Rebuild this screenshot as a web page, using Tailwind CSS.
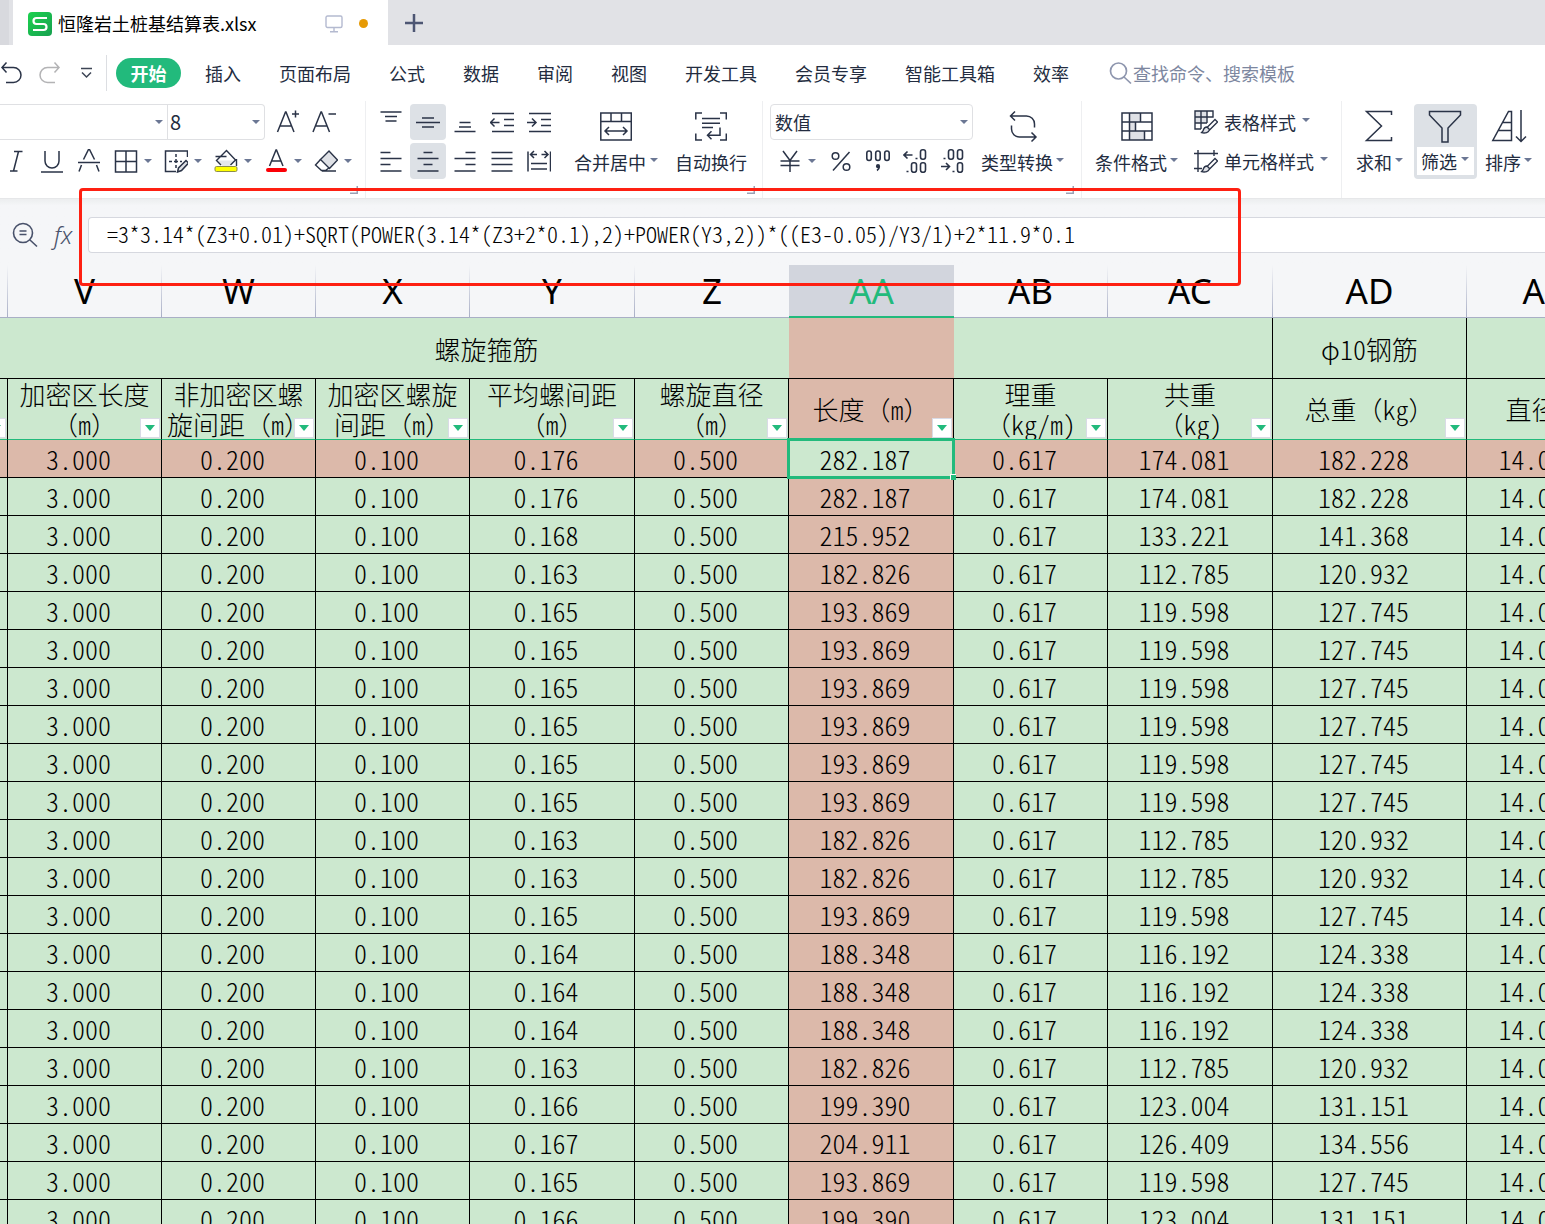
<!DOCTYPE html>
<html lang="zh-CN">
<head>
<meta charset="utf-8">
<title>恒隆岩土桩基结算表.xlsx</title>
<script src="https://cdn.jsdelivr.net/npm/@tailwindcss/browser@4"></script>
</head>
<body class="h-screen overflow-hidden flex flex-col bg-white font-['Noto_Sans_CJK_SC',sans-serif] text-lg leading-6 text-[#232c40]">

<svg class="hidden">
  <symbol id="caret" viewBox="0 0 8 4"><path d="M0 0h8L4 4z" fill="#6b7794"/></symbol>
  <symbol id="corner" viewBox="0 0 8 8"><path d="M7.25 0v7.25H0" fill="none" stroke="#9aa1b5" stroke-width="1.5"/></symbol>
  <symbol id="brush" viewBox="0 0 24 24"><g fill="#fff" stroke="#2a3347" stroke-width="1.3"><path d="M21 9.500l2.500 2.500-8 8-2.500-2.500z"/><path d="M13 17c-3 0-3.500 2-4 4l-1.500 1.700c3.500.8 7.500 0 8-3.200z" fill="#dfe1e6"/></g></symbol>
</svg>

<header class="flex h-[45px] shrink-0 items-stretch bg-[#e1e2e6]">
  <div class="w-[9px] bg-[#d8d9de]"></div>
  <div class="ml-1 flex w-[375px] items-center bg-white pl-[15px] pt-0.5">
    <svg class="size-6" viewBox="0 0 24 24"><defs><linearGradient id="lg" x1="0" y1="0" x2="1" y2="1"><stop offset="0" stop-color="#1cd24f"/><stop offset="1" stop-color="#17a04f"/></linearGradient></defs><rect width="24" height="24" rx="4" fill="url(#lg)"/><path d="M19 6H8.500a3 3 0 0 0 0 6h7a3 3 0 0 1 0 6H5" fill="none" stroke="#fff" stroke-width="2.200"/></svg>
    <span class="ml-1.5 grow pb-0.5 text-black">恒隆岩土桩基结算表.xlsx</span>
    <svg class="size-[18px]" viewBox="0 0 18 18" fill="none" stroke="#b4bad0" stroke-width="1.400"><rect x="1" y="1" width="16" height="11.500" rx="1.500"/><path d="M9 12.500v4M5 16.700h8"/></svg>
    <span class="ml-4 mr-5 size-[9px] rounded-full bg-[#e69a05]"></span>
  </div>
  <button class="ml-4 flex w-5 items-center justify-center" aria-label="新建标签">
    <svg class="size-[18px]" viewBox="0 0 18 18" stroke="#4d5673" stroke-width="2.500"><path d="M9 0v18M0 9h18"/></svg>
  </button>
</header>

<nav class="flex h-14 shrink-0 items-center whitespace-nowrap">
  <button aria-label="撤销" class="ml-px"><svg class="h-6 w-[22px]" viewBox="0 0 22 24" fill="none" stroke="#2a3347" stroke-width="1.500"><path d="M5.500 1.500L1 6.500l4.500 5M1 6.500h11.500a7 7 0 0 1 0 15H5"/></svg></button>
  <button aria-label="恢复" class="ml-4"><svg class="h-6 w-[22px]" viewBox="0 0 22 24" fill="none" stroke="#b3b3b5" stroke-width="1.500"><path d="M15.500 1.500l4.500 5-4.500 5M20 6.500H8.500a7 7 0 0 0 0 15H16"/></svg></button>
  <button aria-label="更多" class="ml-5"><svg class="h-3 w-[11px]" viewBox="0 0 11 12" fill="none" stroke="#3d4555" stroke-width="1.500"><path d="M0 1.500h11M1 5.500l4.500 4.500L10 5.500"/></svg></button>
  <span class="ml-3.5 h-9 w-px bg-[#dcdee2]"></span>
  <button class="ml-[9px] h-[30px] w-[65px] rounded-full bg-[#22ba7c] font-bold text-white">开始</button>
  <div class="ml-6 flex gap-[38px]">
    <button>插入</button><button>页面布局</button><button>公式</button><button>数据</button><button>审阅</button><button>视图</button><button>开发工具</button><button>会员专享</button><button>智能工具箱</button><button>效率</button>
  </div>
  <label class="ml-10 flex grow items-center" aria-label="搜索">
    <svg class="size-6" viewBox="0 0 24 24" fill="none" stroke="#8e96ae" stroke-width="1.700"><circle cx="9.500" cy="10" r="8"/><path d="M15 16l7 6.500"/></svg>
    <input class="w-48 placeholder:text-[#7d879f] placeholder:opacity-100" placeholder="查找命令、搜索模板">
  </label>
</nav>

<section class="flex h-[98px] shrink-0 border-b border-[#e6e7e9] bg-white whitespace-nowrap" aria-label="开始">
  <!-- font -->
  <div class="relative flex w-[366px] shrink-0 flex-col gap-[3px] border-r border-[#eeeff1] pt-[3px]">
    <div class="flex h-9">
      <div class="flex w-[265px] rounded-r border border-l-0 border-[#dfe0e3]">
        <div class="relative flex w-[167px] items-center"><select aria-label="字体" class="h-full w-full appearance-none"><option></option></select><svg class="pointer-events-none absolute right-1 h-1 w-2"><use href="#caret"/></svg></div>
        <div class="relative flex grow items-center border-l border-[#dfe0e3]"><select aria-label="字号" class="h-full w-full appearance-none pl-0.5 text-xl"><option>8</option></select><svg class="pointer-events-none absolute right-1 h-1 w-2"><use href="#caret"/></svg></div>
      </div>
      <button aria-label="增大字号" class="ml-[5px] flex w-9 items-center justify-center"><svg class="size-6" viewBox="0 0 24 24" fill="none" stroke="#2a3347" stroke-width="1.500"><path d="M1.500 22L9.500 2h.5l8 20M4.500 16H15M19.500.500v7M16 4h7"/></svg></button>
      <button aria-label="减小字号" class="flex w-9 items-center justify-center"><svg class="size-6" viewBox="0 0 24 24" fill="none" stroke="#2a3347" stroke-width="1.500"><path d="M1 22L9 2h.500l8 20M4 16h10.500M16.500 4H24"/></svg></button>
    </div>
    <div class="flex h-9 items-center">
      <button aria-label="倾斜" class="flex w-[33px] justify-center"><svg class="size-6" viewBox="0 0 24 24" fill="none" stroke="#2a3347" stroke-width="1.500"><path d="M9 2.500h8.500M5 22h7.500M13.500 2.500L8.500 22"/></svg></button>
      <button aria-label="下划线" class="flex w-[37px] justify-center"><svg class="size-6" viewBox="0 0 24 24" fill="none" stroke="#2a3347" stroke-width="1.500"><path d="M5 2v10a7 7 0 0 0 14 0V2M1 23h22"/></svg></button>
      <button aria-label="删除线" class="flex w-[37px] justify-center"><svg class="size-6" viewBox="0 0 24 24" fill="none" stroke="#2a3347" stroke-width="1.500"><path d="M6.500 10.500L11.500.500h1l5 10M1 13.500h22M4.500 16L2 22.500M19.500 16l2.500 6.500"/></svg></button>
      <button aria-label="边框" class="flex w-[50px] items-center gap-1.5 pl-[7px]"><svg class="size-6" viewBox="0 0 24 24" fill="none" stroke="#2a3347" stroke-width="1.500"><path d="M1.500 2h21v21h-21zM12 2v21M1.500 12.500h21"/></svg><svg class="h-1 w-2"><use href="#caret"/></svg></button>
      <button aria-label="绘图边框" class="flex w-[50px] items-center gap-1.5 pl-[7px]"><svg class="size-6" viewBox="0 0 24 24" fill="none" stroke="#2a3347" stroke-width="1.500"><path d="M23.500 8V2h-22v20.500H12"/><path d="M12 5v3M12 10v4M12 16v3M5 12.500h3M10 12.500h4M16 12.500h2"/><path d="M13.500 23l1-4 7.500-7.500 2.500 2.500-7 7.500z" fill="#dfe1e6"/></svg><svg class="h-1 w-2"><use href="#caret"/></svg></button>
      <button aria-label="填充颜色" class="flex w-[50px] items-center gap-1.5 pl-[7px]"><svg class="size-6" viewBox="0 0 24 24" fill="none" stroke="#2a3347" stroke-width="1.400"><path d="M3 11.500h18l-6 6H9z" fill="#e4e6ea" stroke="none"/><path d="M7 16L2.500 11.500 12.500 1.500l9 9.500-5 5M1.500 7.500h11M22.500 10v7"/><rect x="1" y="17.500" width="22" height="5" rx="1.500" fill="#ff0" stroke="#8d8d4a" stroke-width="1"/></svg><svg class="h-1 w-2"><use href="#caret"/></svg></button>
      <button aria-label="字体颜色" class="flex w-[50px] items-center gap-1.5 pl-[7px]"><svg class="size-6" viewBox="0 0 24 24" fill="none" stroke="#2a3347" stroke-width="1.500"><path d="M5.500 17L12 1h.5L19 17M8 12h9"/><rect x="2" y="19" width="21" height="4" rx="2" fill="#fb0007" stroke="none"/></svg><svg class="h-1 w-2"><use href="#caret"/></svg></button>
      <button aria-label="清除" class="flex w-[50px] items-center gap-1.5 pl-[7px]"><svg class="size-6" viewBox="0 0 24 24" fill="none" stroke="#2a3347" stroke-width="1.400"><path d="M6.500 10.500L15 2l8.500 9-8 8.500z" fill="#dfe1e6"/><path d="M6.500 10.500L1.500 16l6 5.500h4l4-3M8 22h14"/></svg><svg class="h-1 w-2"><use href="#caret"/></svg></button>
    </div>
    <svg class="absolute bottom-1 right-[7px] size-2"><use href="#corner"/></svg>
  </div>

  <!-- alignment -->
  <div class="relative flex w-[397px] shrink-0 border-r border-[#eeeff1] pl-[7px] pt-[3px]">
    <div class="grid h-[75px] grid-cols-[repeat(5,36px)] gap-x-px gap-y-[3px]">
      <button aria-label="顶端对齐" class="flex items-center justify-center"><svg class="size-6" viewBox="0 0 24 24" stroke="#2a3347" stroke-width="1.500"><path d="M1.500 2h21M6 6.500h12M6.500 11h11"/></svg></button>
      <button aria-label="垂直居中" class="flex items-center justify-center rounded bg-[#dde1e6]"><svg class="size-6" viewBox="0 0 24 24" stroke="#2a3347" stroke-width="1.500"><path d="M6 8h12M0 12.500h24M6 17h12"/></svg></button>
      <button aria-label="底端对齐" class="flex items-center justify-center"><svg class="size-6" viewBox="0 0 24 24" stroke="#2a3347" stroke-width="1.500"><path d="M6.500 12.500h11M6 17h12M1.500 21.500h21"/></svg></button>
      <button aria-label="减少缩进" class="flex items-center justify-center"><svg class="size-6" viewBox="0 0 24 24" fill="none" stroke="#2a3347" stroke-width="1.500"><path d="M2 3.500h22M14 9.500h10M14 15.500h10M2 21.500h22M0 12.500h9.500M4.500 8.500L.500 12.500l4 4"/></svg></button>
      <button aria-label="增加缩进" class="flex items-center justify-center"><svg class="size-6" viewBox="0 0 24 24" fill="none" stroke="#2a3347" stroke-width="1.500"><path d="M2 3.500h22M14 9.500h10M14 15.500h10M2 21.500h22M0 12.500h9.500M5 8.500l4 4-4 4"/></svg></button>
      <button aria-label="左对齐" class="flex items-center justify-center"><svg class="size-6" viewBox="0 0 24 24" stroke="#2a3347" stroke-width="1.500"><path d="M1.500 3.500h10M1.500 9.500h21M1.500 15.500h10M1.500 22h21"/></svg></button>
      <button aria-label="水平居中" class="flex items-center justify-center rounded bg-[#dde1e6]"><svg class="size-6" viewBox="0 0 24 24" stroke="#2a3347" stroke-width="1.500"><path d="M7.500 3.500h9M1.500 9.500h21M7.500 15.500h9M1.500 22h21"/></svg></button>
      <button aria-label="右对齐" class="flex items-center justify-center"><svg class="size-6" viewBox="0 0 24 24" stroke="#2a3347" stroke-width="1.500"><path d="M12.500 3.500h10M1.500 9.500h21M12.500 15.500h10M1.500 22h21"/></svg></button>
      <button aria-label="两端对齐" class="flex items-center justify-center"><svg class="size-6" viewBox="0 0 24 24" stroke="#2a3347" stroke-width="1.500"><path d="M1.500 3.500h21M1.500 9.500h21M1.500 15.500h21M1.500 22h21"/></svg></button>
      <button aria-label="分散对齐" class="flex items-center justify-center"><svg class="size-6" viewBox="0 0 24 24" fill="none" stroke="#2a3347" stroke-width="1.500"><path d="M1 2.500v20M23.500 2.500v20M4 14.500h16M4 20h16M4 5.500h6M7 2L3.500 5.500 7 9M20.500 5.500h-6M17.500 2L21 5.500 17.500 9"/></svg></button>
    </div>
    <button class="ml-[17px] flex h-[75px] flex-col items-center gap-2 pt-1.5">
      <svg class="size-8" viewBox="0 0 32 32" fill="none" stroke="#2a3347" stroke-width="1.500"><path d="M.8 3h30.500v27H.8zM.8 11.500h30.500M11 3v8.500M21.500 3v8.500M5 21h22M9 17l-4 4 4 4M23 17l4 4-4 4"/></svg>
      <span class="flex items-center gap-1">合并居中<svg class="h-1 w-2 -translate-y-0.5"><use href="#caret"/></svg></span>
    </button>
    <button class="ml-[17px] flex h-[75px] flex-col items-center gap-2 pt-1.5">
      <svg class="size-8" viewBox="0 0 32 32" fill="none" stroke="#2a3347" stroke-width="1.500"><path d="M7 3H.8v6.500M25 3h6.300v6.500M.8 23.500V30H7M31.300 23.500V30H25M7 8.500h18M7 13.200h18M7 17.500h11M25 17.500v7.700H12.500M16.500 21.200l-4 4 4 4"/></svg>
      <span>自动换行</span>
    </button>
    <svg class="absolute bottom-1 right-[7px] size-2"><use href="#corner"/></svg>
  </div>

  <!-- number -->
  <div class="relative flex w-[319px] shrink-0 border-r border-[#eeeff1] pl-[7px] pt-[3px]">
    <div class="flex w-[203px] flex-col gap-[3px]">
      <div class="relative flex h-9 items-center rounded border border-[#dfe0e3]"><select aria-label="数字格式" class="h-full w-full appearance-none pl-1"><option>数值</option></select><svg class="pointer-events-none absolute right-1 h-1 w-2"><use href="#caret"/></svg></div>
      <div class="flex h-9 items-center gap-px">
        <button aria-label="货币" class="flex w-[52px] items-center gap-1.5 pl-2"><svg class="size-6" viewBox="0 0 24 24" fill="none" stroke="#2a3347" stroke-width="1.500"><path d="M5 2l7 9.500L19 2M2.500 12h19M2.500 16.500h19M12 11.500V23"/></svg><svg class="h-1 w-2"><use href="#caret"/></svg></button>
        <button aria-label="百分比" class="flex w-9 justify-center"><svg class="size-6" viewBox="0 0 24 24" fill="none" stroke="#2a3347" stroke-width="1.500"><circle cx="6.500" cy="7" r="3.300"/><circle cx="17.500" cy="18" r="3.300"/><path d="M20.500 3L4 21.500"/></svg></button>
        <button aria-label="千位分隔" class="flex w-9 justify-center"><svg class="size-6" viewBox="0 0 24 24" fill="none" stroke="#2a3347" stroke-width="1.600"><rect x=".8" y="2" width="4.500" height="9.500" rx="2.200"/><rect x="9.700" y="2" width="4.500" height="9.500" rx="2.200"/><rect x="18.700" y="2" width="4.500" height="9.500" rx="2.200"/><circle cx="12" cy="17.200" r="1.300" fill="#2a3347"/><path d="M13.300 17.500c0 2-.8 3-2.300 4"/></svg></button>
        <button aria-label="增加小数位" class="flex w-9 justify-center"><svg class="size-6" viewBox="0 0 24 24" fill="none" stroke="#2a3347" stroke-width="1.600"><path d="M1 6h8.500M4.500 2.500L1 6l3.500 3.500M12.500 9.500h2M3.500 22.500h2"/><rect x="17.500" y=".8" width="5" height="9.500" rx="2.200"/><rect x="8.500" y="13.800" width="5" height="9.500" rx="2.200"/><rect x="17.500" y="13.800" width="5" height="9.500" rx="2.200"/></svg></button>
        <button aria-label="减少小数位" class="flex w-9 justify-center"><svg class="size-6" viewBox="0 0 24 24" fill="none" stroke="#2a3347" stroke-width="1.600"><path d="M1 17.500h8.500M6 14l3.500 3.500L6 21M12.500 22.500h2M3.500 9.500h2"/><rect x="8.500" y=".8" width="5" height="9.500" rx="2.200"/><rect x="17.500" y=".8" width="5" height="9.500" rx="2.200"/><rect x="17.500" y="13.800" width="5" height="9.500" rx="2.200"/></svg></button>
      </div>
    </div>
    <button class="ml-2 flex h-[75px] flex-col items-center gap-2 pt-1.5">
      <svg class="size-8 overflow-visible" viewBox="0 0 32 32" fill="none" stroke="#2a3347" stroke-width="1.500"><path d="M8 1.500L3.500 6 8 10.500M3.500 6h16a8 8 0 0 1 8 8v3.500M24.500 22.500L29 27l-4.500 4.500M29 27H12.500a8 8 0 0 1-8-8v-3.500"/></svg>
      <span class="flex items-center gap-[3px]">类型转换<svg class="h-1 w-2 -translate-y-0.5"><use href="#caret"/></svg></span>
    </button>
    <svg class="absolute bottom-1 right-[7px] size-2"><use href="#corner"/></svg>
  </div>

  <!-- styles -->
  <div class="flex w-[260px] shrink-0 border-r border-[#eeeff1] pl-[13px] pt-[3px]">
    <button class="flex h-[75px] flex-col items-center gap-2 pt-1.5">
      <svg class="size-8" viewBox="0 0 32 32" fill="none" stroke="#2a3347" stroke-width="1.500"><path d="M8.500 3h11v9h-11zM8.500 12h6v9h-6zM8.500 21h15v9h-15z" fill="#dfe1e6" stroke="none"/><path d="M1 3h30v27H1zM1 12h30M1 21h30M8.500 3v27M19.500 3v9M14.500 12v9M23.500 21v9"/></svg>
      <span class="flex items-center gap-[3px]">条件格式<svg class="h-1 w-2 -translate-y-0.5"><use href="#caret"/></svg></span>
    </button>
    <div class="ml-4 flex flex-col gap-[3px]">
      <button class="flex h-9 items-center gap-1.5"><svg class="size-6" viewBox="0 0 24 24" fill="none" stroke="#2a3347" stroke-width="1.400"><path d="M1 1h12v12H1z" fill="#dfe1e6" stroke="none"/><path d="M7 19H1V1h18v6H1M1 13h12M7 1v18M13 1v12"/><use href="#brush" width="24" height="24"/></svg><span class="flex items-center gap-1.5">表格样式<svg class="h-1 w-2 -translate-y-0.5"><use href="#caret"/></svg></span></button>
      <button class="flex h-9 items-center gap-1.5"><svg class="size-6" viewBox="0 0 24 24" fill="none" stroke="#2a3347" stroke-width="1.400"><path d="M0 4.500h24M4 1v22M20 1v6M0 19.500h8"/><use href="#brush" width="24" height="24"/></svg><span class="flex items-center gap-1.5">单元格样式<svg class="h-1 w-2 -translate-y-0.5"><use href="#caret"/></svg></span></button>
    </div>
  </div>

  <!-- editing -->
  <div class="flex pl-3.5 pt-[3px]">
    <button class="flex h-[75px] flex-col items-center gap-2 pt-1.5">
      <svg class="size-8" viewBox="0 0 32 32" fill="none" stroke="#2a3347" stroke-width="1.500"><path d="M27.500 5V1.500h-25l15 14.500-15 14.500h25V27"/></svg>
      <span class="flex items-center gap-[3px]">求和<svg class="h-1 w-2 -translate-y-0.5"><use href="#caret"/></svg></span>
    </button>
    <button class="ml-[11px] flex h-[75px] flex-col items-center gap-[5px] rounded bg-[#dde1e6] px-[3px] pt-1.5">
      <svg class="size-8 overflow-visible" viewBox="0 0 32 32" fill="none" stroke="#2a3347" stroke-width="1.500"><path d="M-.5 1.500h31V5L18 18v14h-6V18L-.5 5z"/></svg>
      <span class="flex h-7 items-center gap-1 bg-white pl-1 pr-[5px]">筛选<svg class="h-1 w-2 -translate-y-0.5"><use href="#caret"/></svg></span>
    </button>
    <button class="ml-2 flex h-[75px] flex-col items-center gap-2 pt-1.5">
      <svg class="h-8 w-[34px] overflow-visible" viewBox="0 0 34 32" fill="none" stroke="#2a3347" stroke-width="1.500"><path d="M16.500 1.500h3v29H.8zM11 12.500h8.500M6.500 20.500h13M29 0v31.500M24 26.500l5 5 5-5"/></svg>
      <span class="flex items-center gap-[3px]">排序<svg class="h-1 w-2 -translate-y-0.5"><use href="#caret"/></svg></span>
    </button>
  </div>
</section>

<section class="relative flex h-[66px] shrink-0 items-center bg-[#f5f6f8] bg-linear-to-b from-[#eceeef] to-[#f5f6f8] to-10% pl-3 pt-1.5">
  <svg class="size-[26px]" viewBox="0 0 26 26" fill="none" stroke="#48516a" stroke-width="1.600"><circle cx="11" cy="11" r="9.500"/><path d="M7.500 9h7M7.500 12.500h7M18 18l7 6.500"/></svg>
  <button class="ml-4 w-6 text-left font-['Noto_Sans'] text-2xl font-light italic leading-9 text-[#48516a]" aria-label="插入函数">fx</button>
  <input aria-label="编辑栏" class="ml-2.5 h-9 grow rounded-l border border-r-0 border-[#d6d8df] bg-white pb-1 pl-[18px] text-[22px] font-light text-black [font-feature-settings:'hwid']" value="=3*3.14*(Z3+0.01)+SQRT(POWER(3.14*(Z3+2*0.1),2)+POWER(Y3,2))*((E3-0.05)/Y3/1)+2*11.9*0.1">
  <div class="pointer-events-none absolute -top-[11px] left-[79px] z-20 h-[98px] w-[1162px] rounded-sm border-3 border-[#fe2012]"></div>
</section>

<main class="grow overflow-hidden bg-[#cce8cf]">
  <table class="w-[1621px] table-fixed border-separate border-spacing-0 text-center text-[26px] leading-[30px] text-black">
    <colgroup><col class="w-2"><col class="w-[154px]"><col class="w-[154px]"><col class="w-[154px]"><col class="w-[165px]"><col class="w-[154px]"><col class="w-[165px]"><col class="w-[154px]"><col class="w-[165px]"><col class="w-[194px]"><col class="w-[154px]"></colgroup>
    <thead id="head"></thead>
    <tbody id="body"></tbody>
  </table>
</main>

<script>
const letters = ['', 'V', 'W', 'X', 'Y', 'Z', 'AA', 'AB', 'AC', 'AD', 'AE'];
const titles = ['', '加密区长度<br>（m）', '非加密区螺<br>旋间距（m）', '加密区螺旋<br>间距（m）', '平均螺间距<br>（m）', '螺旋直径<br>（m）', '长度（m）', '理重<br>（kg/m)', '共重<br>（kg)', '总重（kg）', '直径'];
const a = ['0.163', '182.826', '112.785', '120.932'];
const b = ['0.165', '193.869', '119.598', '127.745'];
const c = ['0.164', '188.348', '116.192', '124.338'];
const d = ['0.176', '282.187', '174.081', '182.228'];
const e = ['0.166', '199.390', '123.004', '131.151'];
const rows = [d, d, ['0.168', '215.952', '133.221', '141.368'], a, b, b, b, b, b, b, a, a, b, c, c, c, a, e, ['0.167', '204.911', '126.409', '134.556'], b, e];

// Latin letters and digits take half-width forms; everything else stays full width.
const half = t => t.replace(/(<br>)|([a-z0-9\/)]+)/g, (m, br) => br || `<span class="[font-feature-settings:'hwid']">${m}</span>`);

const letterCell = (t, i) => i === 6
  ? `<th class="border-b-2 border-[#22ba7c] bg-[#d2d5dd] p-0 font-normal text-[#22ba7c]">${t}</th>`
  : `<th class="border-b border-[#a9afc6] bg-[#f5f6f8] p-0 font-normal"><div class="flex h-[52px] items-stretch"><span class="grow leading-[52px]">${t}</span>${i === 5 ? '' : '<span class="w-px bg-linear-to-b from-transparent to-[#a9afc6]"></span>'}</div></th>`;
const filter = '<button aria-label="筛选" class="absolute bottom-px right-px flex size-5 items-center justify-center border border-[#d9dbe6] bg-white"><svg class="h-1.5 w-2.5" viewBox="0 0 10 6"><path d="M0 0h10L5 6z" fill="#22ba7c"/></svg></button>';
const titleCell = (t, i) => `<th class="border-r border-b border-r-black border-b-[#22ba7c] p-0 font-light ${i === 6 ? 'bg-[#dcb9aa]' : 'bg-[#cce8cf]'}"><div class="relative flex h-[60px] items-center justify-center overflow-hidden whitespace-nowrap ${i === 10 ? 'pr-6' : ''}"><span>${half(t)}</span>${filter}</div></th>`;

document.getElementById('head').innerHTML =
  `<tr class="h-[53px] font-['Noto_Sans'] text-[35px]">${letters.map(letterCell).join('')}</tr>` +
  `<tr class="h-[61px]">
    <th colspan="6" class="border-b border-black bg-[#cce8cf] p-0 pl-46 pt-0.5 font-light">螺旋箍筋</th>
    <th class="border-b border-black bg-[#dcb9aa] p-0"></th>
    <th colspan="2" class="border-r border-b border-black bg-[#cce8cf] p-0"></th>
    <th class="border-r border-b border-black bg-[#cce8cf] p-0 pt-0.5 font-light">${half('φ10钢筋')}</th>
    <th class="border-b border-black bg-[#cce8cf] p-0"></th>
  </tr>` +
  `<tr class="h-[61px]">${titles.map(titleCell).join('')}</tr>`;

const cell = (v, i, r) => {
  if (r === 0 && i === 6) return `<td class="relative border-r border-b border-black bg-[#cce8cf] p-0 pr-3">${v}<span class="absolute -top-0.5 -left-0.5 -right-0.5 -bottom-0.5 border-3 border-[#22ba7c]"></span><span class="absolute -right-[3px] -bottom-[3px] size-1.5 border-t border-l border-white bg-[#22ba7c]"></span></td>`;
  return `<td class="border-r border-b border-black p-0 pr-3 ${r === 0 || i === 6 ? 'bg-[#dcb9aa]' : 'bg-[#cce8cf]'}">${v}</td>`;
};
document.getElementById('body').innerHTML = rows.map((x, r) =>
  `<tr class="h-[38px] font-light [font-feature-settings:'hwid']">${['', '3.000', '0.200', '0.100', x[0], '0.500', x[1], '0.617', x[2], x[3], '14.000'].map((v, i) => i ? cell(v, i, r) : `<td class="border-r border-b border-black p-0 ${r === 0 ? 'bg-[#dcb9aa]' : 'bg-[#cce8cf]'}"></td>`).join('')}</tr>`).join('');
</script>
</body>
</html>
